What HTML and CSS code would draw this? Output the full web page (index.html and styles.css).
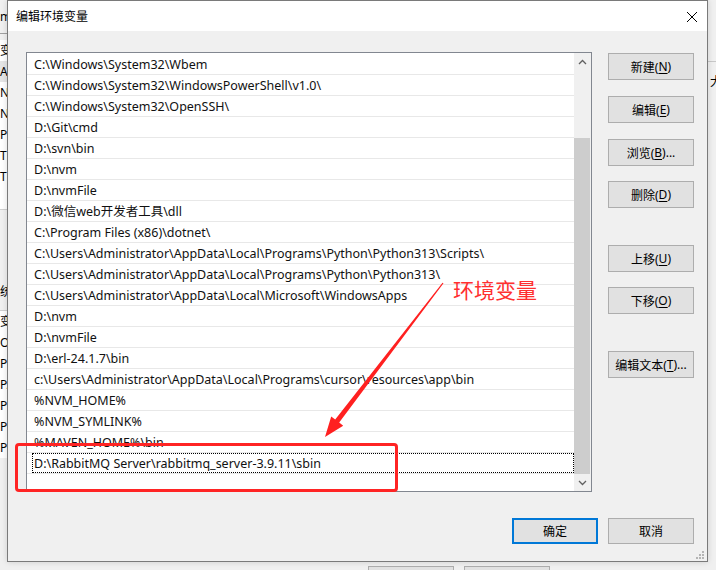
FILE: index.html
```html
<!DOCTYPE html>
<html lang="zh-CN">
<head>
<meta charset="utf-8">
<title>编辑环境变量</title>
<link rel="stylesheet" href="styles.css">
</head>
<body>
<div class="desktop">
  <div class="bg-left">
    <div class="bgl-title">m</div>
    <div class="bgl-sep"></div>
    <div class="bgl-pad"></div>
    <div class="bgl-row bgl-head">变</div>
    <div class="bgl-row bgl-sel">A</div>
    <div class="bgl-row">N</div>
    <div class="bgl-row">N</div>
    <div class="bgl-row">Pa</div>
    <div class="bgl-row">TE</div>
    <div class="bgl-row">TM</div>
    <div class="bgl-rest"></div>
    <div class="bgl-gap"></div>
    <div class="bgl-label">统</div>
    <div class="bgl-gap2"></div>
    <div class="bgl-row bgl-head">变</div>
    <div class="bgl-row">OS</div>
    <div class="bgl-row">Pa</div>
    <div class="bgl-row">PA</div>
    <div class="bgl-row">PH</div>
    <div class="bgl-row">PR</div>
    <div class="bgl-row">PS</div>
  </div>
  <div class="bg-right">
    <div class="bgr-line"></div>
    <div class="bgr-row">大</div>
  </div>
  <div class="bg-bottom">
    <div class="bgb-btn"></div>
    <div class="bgb-btn"></div>
  </div>

  <div class="dialog">
    <div class="titlebar">
      <span class="title">编辑环境变量</span>
      <svg class="close" width="12" height="12" viewBox="0 0 12 12"><path d="M1 1L11 11M11 1L1 11" stroke="#000" stroke-width="1" fill="none"/></svg>
    </div>
    <div class="body">
      <div class="main">
        <div class="listbox">
          <div class="rows">
            <div class="row">C:\Windows\System32\Wbem</div>
            <div class="row">C:\Windows\System32\WindowsPowerShell\v1.0\</div>
            <div class="row">C:\Windows\System32\OpenSSH\</div>
            <div class="row">D:\Git\cmd</div>
            <div class="row">D:\svn\bin</div>
            <div class="row">D:\nvm</div>
            <div class="row">D:\nvmFile</div>
            <div class="row">D:\微信web开发者工具\dll</div>
            <div class="row">C:\Program Files (x86)\dotnet\</div>
            <div class="row">C:\Users\Administrator\AppData\Local\Programs\Python\Python313\Scripts\</div>
            <div class="row">C:\Users\Administrator\AppData\Local\Programs\Python\Python313\</div>
            <div class="row">C:\Users\Administrator\AppData\Local\Microsoft\WindowsApps</div>
            <div class="row">D:\nvm</div>
            <div class="row">D:\nvmFile</div>
            <div class="row">D:\erl-24.1.7\bin</div>
            <div class="row">c:\Users\Administrator\AppData\Local\Programs\cursor\resources\app\bin</div>
            <div class="row">%NVM_HOME%</div>
            <div class="row">%NVM_SYMLINK%</div>
            <div class="row">%MAVEN_HOME%\bin</div>
            <div class="row focused">D:\RabbitMQ Server\rabbitmq_server-3.9.11\sbin</div>
          </div>
          <div class="scrollbar">
            <div class="sb-btn"><svg width="9" height="6" viewBox="0 0 9 6"><path d="M1 5L4.5 1.5L8 5" stroke="#606060" stroke-width="1.3" fill="none"/></svg></div>
            <div class="sb-track"><div class="sb-thumb"></div></div>
            <div class="sb-btn"><svg width="9" height="6" viewBox="0 0 9 6"><path d="M1 1L4.5 4.5L8 1" stroke="#606060" stroke-width="1.3" fill="none"/></svg></div>
          </div>
        </div>
        <div class="side">
          <div class="btn b-new">新建(<u>N</u>)</div>
          <div class="btn b-edit">编辑(<u>E</u>)</div>
          <div class="btn b-browse">浏览(<u>B</u>)...</div>
          <div class="btn b-del">删除(<u>D</u>)</div>
          <div class="btn b-up">上移(<u>U</u>)</div>
          <div class="btn b-down">下移(<u>O</u>)</div>
          <div class="btn b-text">编辑文本(<u>T</u>)...</div>
        </div>
      </div>
      <div class="footer">
        <div class="btn btn-default">确定</div>
        <div class="btn">取消</div>
      </div>
    </div>
    <svg class="grip" width="8" height="8" viewBox="0 0 8 8">
      <rect x="6" y="0" width="2" height="2" fill="#b4b4b4"/>
      <rect x="3" y="3" width="2" height="2" fill="#b4b4b4"/>
      <rect x="6" y="3" width="2" height="2" fill="#b4b4b4"/>
      <rect x="0" y="6" width="2" height="2" fill="#b4b4b4"/>
      <rect x="3" y="6" width="2" height="2" fill="#b4b4b4"/>
      <rect x="6" y="6" width="2" height="2" fill="#b4b4b4"/>
    </svg>
  </div>

  <div class="annot-box"></div>
  <div class="annot-text">环境变量</div>
  <svg class="annot-arrow" width="716" height="570" viewBox="0 0 716 570">
    <polygon points="443.5,283.3 339.2,422.6 343.2,425.8 325,437 331.2,416.4 335.2,419.6 442.5,282.7" fill="#ff2020"/>
  </svg>
</div>
</body>
</html>
```

FILE: styles.css
```css
* { box-sizing: border-box; margin: 0; padding: 0; }
html, body { width: 716px; height: 570px; overflow: hidden; }
body {
  background: #f0f0f0;
  font-family: "Noto Sans", "Noto Sans CJK SC", sans-serif;
  font-size: 12px;
  color: #000;
}
.desktop { position: relative; width: 716px; height: 570px; overflow: hidden; background: #f0f0f0; }

/* background window fragments */
.bg-left {
  position: absolute; left: 0; top: 0; width: 7px; height: 570px;
  overflow: hidden; display: flex; flex-direction: column;
  background: #f0f0f0;
}
.bgl-title { height: 33px; padding-top: 9px; line-height: 16px; flex: none; }
.bgl-sep { height: 1px; background: #a0a0a0; flex: none; }
.bgl-pad { height: 6px; flex: none; }
.bgl-row { height: 21px; line-height: 21px; background: #fff; white-space: nowrap; flex: none; }
.bgl-head { background: #fff; }
.bgl-sel { background: #e5e5e5; }
.bgl-rest { height: 23px; background: #fff; flex: none; border-bottom: 1px solid #d0d0d0; }
.bgl-gap { height: 73px; flex: none; }
.bgl-label { height: 17px; line-height: 17px; flex: none; }
.bgl-gap2 { height: 11px; flex: none; border-bottom: 1px solid #d0d0d0; }

.bg-right {
  position: absolute; left: 708px; top: 0; width: 8px; height: 570px;
  overflow: hidden; background: #f0f0f0; padding-top: 61px;
}
.bgr-line { height: 1px; background: #c8c8c8; }
.bgr-row { line-height: 40px; padding-left: 2px; }

.bg-bottom {
  position: absolute; left: 0; top: 562px; width: 716px; height: 8px;
  display: flex; gap: 10px; padding-left: 368px; padding-top: 4px;
}
.bgb-btn { width: 86px; height: 20px; border: 1px solid #adadad; background: #e1e1e1; }

/* dialog */
.dialog {
  position: absolute; left: 7px; top: 0; width: 701px; height: 562px;
  border: 1px solid #7a7a7a; background: #f0f0f0;
  display: flex; flex-direction: column;
  box-shadow: 0 0 6px rgba(0,0,0,0.15);
}
.titlebar {
  height: 30px; background: #fff; flex: none;
  display: flex; align-items: center; justify-content: space-between;
  padding: 1px 9px 0 8px;
}
.title { font-size: 12px; line-height: 16px; }
.close { display: block; }

.body { flex: 1; display: flex; flex-direction: column; padding: 21px 13px 0 18px; }
.main { display: flex; gap: 16px; }

.listbox {
  width: 566px; height: 440px; border: 1px solid #828790; background: #fff;
  display: flex; padding-top: 1px;
}
.rows { flex: 1; display: flex; flex-direction: column; }
.row {
  height: 21px; line-height: 22px; border-bottom: 1px solid #e8e8e8;
  padding-left: 7px; white-space: nowrap; position: relative;
  font-size: 12.5px; color: #111;
}
.row.focused::after {
  content: ""; position: absolute; left: 5px; right: 0; top: 0; bottom: 0;
  border: 1px dotted #000;
}

.scrollbar { width: 17px; display: flex; flex-direction: column; background: #f0f0f0; margin-top: -1px; }
.sb-btn { height: 17px; display: flex; align-items: center; justify-content: center; }
.sb-track { flex: 1; display: flex; flex-direction: column; justify-content: flex-end; }
.sb-thumb { height: 336px; margin: 0 1px 0 0; background: #cdcdcd; }

.side { width: 86px; display: flex; flex-direction: column; padding-top: 1px; }
.btn {
  height: 27px; border: 1px solid #adadad; background: #e1e1e1;
  display: flex; align-items: center; justify-content: center;
  font-size: 12px; white-space: nowrap;
}
.btn u { text-decoration: underline; text-underline-offset: 2px; }
.b-edit, .b-browse { margin-top: 16px; }
.b-del, .b-down { margin-top: 15px; }
.b-up, .b-text { margin-top: 37px; }

.footer { display: flex; justify-content: flex-end; gap: 10px; margin-top: 26px; }
.footer .btn { width: 86px; height: 26px; }
.btn-default { border: 2px solid #0078d7; }

.grip { position: absolute; right: 3px; bottom: 2px; }

/* annotations */
.annot-box {
  position: absolute; left: 15px; top: 443px; width: 383px; height: 49px;
  border: 3px solid #ff2424; border-radius: 4px;
}
.annot-text {
  position: absolute; left: 453px; top: 277px;
  font-family: "Noto Sans CJK SC", sans-serif; font-size: 21px; line-height: 24px;
  color: #ff3030;
}
.annot-arrow { position: absolute; left: 0; top: 0; pointer-events: none; }
```
